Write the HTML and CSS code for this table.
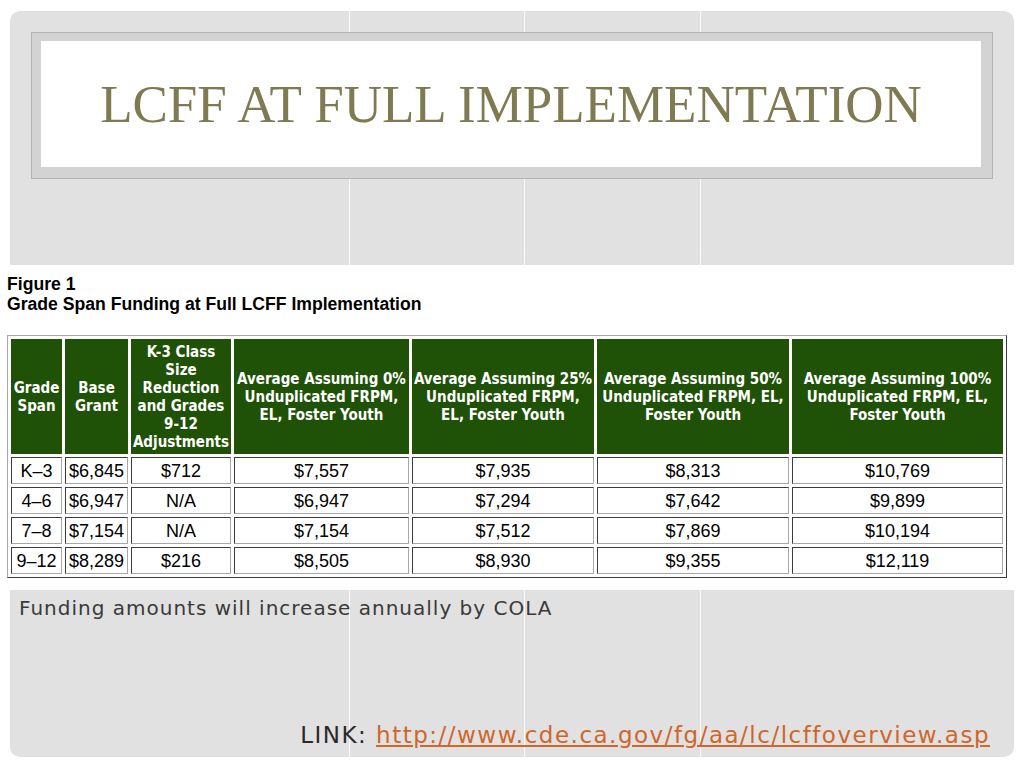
FILE: index.html
```html
<!DOCTYPE html>
<html lang="en">
<head>
<meta charset="utf-8">
<title>LCFF at Full Implementation</title>
<link rel="stylesheet" href="styles.css">
</head>
<body>
<div class="slide">
  <div class="title-frame">
    <div class="title-inner">
      <h1 class="title">LCFF AT FULL IMPLEMENTATION</h1>
    </div>
  </div>

  <div class="figure">
    <div class="caption">
      <div>Figure 1</div>
      <div>Grade Span Funding at Full LCFF Implementation</div>
    </div>
    <table class="funding">
      <colgroup>
        <col class="c1"><col class="c2"><col class="c3"><col class="c4"><col class="c5"><col class="c6"><col class="c7">
      </colgroup>
      <thead>
        <tr>
          <th>Grade<br>Span</th>
          <th>Base<br>Grant</th>
          <th>K-3 Class<br>Size<br>Reduction<br>and Grades<br>9-12<br>Adjustments</th>
          <th>Average Assuming 0%<br>Unduplicated FRPM,<br>EL, Foster Youth</th>
          <th>Average Assuming 25%<br>Unduplicated FRPM,<br>EL, Foster Youth</th>
          <th>Average Assuming 50%<br>Unduplicated FRPM, EL,<br>Foster Youth</th>
          <th>Average Assuming 100%<br>Unduplicated FRPM, EL,<br>Foster Youth</th>
        </tr>
      </thead>
      <tbody>
        <tr><td>K–3</td><td>$6,845</td><td>$712</td><td>$7,557</td><td>$7,935</td><td>$8,313</td><td>$10,769</td></tr>
        <tr><td>4–6</td><td>$6,947</td><td>N/A</td><td>$6,947</td><td>$7,294</td><td>$7,642</td><td>$9,899</td></tr>
        <tr><td>7–8</td><td>$7,154</td><td>N/A</td><td>$7,154</td><td>$7,512</td><td>$7,869</td><td>$10,194</td></tr>
        <tr><td>9–12</td><td>$8,289</td><td>$216</td><td>$8,505</td><td>$8,930</td><td>$9,355</td><td>$12,119</td></tr>
      </tbody>
    </table>
  </div>

  <p class="note">Funding amounts will increase annually by COLA</p>

  <p class="link-line">LINK: <a class="link" href="#">http://www.cde.ca.gov/fg/aa/lc/lcffoverview.asp</a></p>
</div>
</body>
</html>
```

FILE: styles.css
```css
html, body {
  margin: 0;
  padding: 0;
  background: #ffffff;
}

body {
  width: 1024px;
  height: 768px;
  overflow: hidden;
}

.slide {
  margin: 11px 10px 0 10px;
  height: 746px;
  border-radius: 10px;
  background-color: #e1e1e1;
  background-image: linear-gradient(to right,
    transparent 339px, rgba(255,255,255,0.85) 339px, rgba(255,255,255,0.85) 340px, transparent 340px,
    transparent 514px, rgba(255,255,255,0.85) 514px, rgba(255,255,255,0.85) 515px, transparent 515px,
    transparent 690px, rgba(255,255,255,0.85) 690px, rgba(255,255,255,0.85) 691px, transparent 691px);
  display: flex;
  flex-direction: column;
}

.title-frame {
  margin: 21px 0 0 21px;
  width: 962px;
  height: 147px;
  box-sizing: border-box;
  border: 1px solid #b4b4b4;
  background: #d3d3d3;
  padding: 8px 11px 11px 9px;
}

.title-inner {
  height: 100%;
  background: #ffffff;
  display: flex;
  align-items: center;
  justify-content: center;
}

.title {
  margin: 0;
  font-family: "Liberation Serif", "Times New Roman", serif;
  font-weight: normal;
  font-size: 53px;
  line-height: 1;
  color: #7e7a51;
  letter-spacing: 0;
}

.figure {
  margin: 86px -10px 0 -10px;
  height: 325px;
  box-sizing: border-box;
  background: #ffffff;
  padding: 9px 0 0 7px;
}

.caption {
  font-family: "Liberation Sans", Arial, sans-serif;
  font-weight: bold;
  font-size: 17.6px;
  line-height: 20px;
  color: #000;
}

.funding {
  margin-top: 21px;
  width: 1000px;
  table-layout: fixed;
  border-collapse: separate;
  border-spacing: 3px;
  border-width: 1px;
  border-style: solid;
  border-color: #a8a8a8 #3c3c3c #3c3c3c #a8a8a8;
}

.c1 { width: 51px; }
.c2 { width: 63px; }
.c3 { width: 100px; }
.c4 { width: 175px; }
.c5 { width: 182px; }
.c6 { width: 192px; }
.c7 { width: 211px; }

.funding th {
  height: 115px;
  box-sizing: border-box;
  padding: 0;
  background: #1f5106;
  color: #ffffff;
  font-family: "DejaVu Sans Condensed", "DejaVu Sans", sans-serif;
  font-stretch: condensed;
  font-weight: bold;
  font-size: 15px;
  line-height: 18px;
  text-align: center;
  vertical-align: middle;
  border: 1px solid #1f5106;
  white-space: nowrap;
}

.funding td {
  height: 27px;
  box-sizing: border-box;
  padding: 0;
  font-family: "Liberation Sans", Arial, sans-serif;
  font-size: 18px;
  line-height: 24px;
  color: #000;
  text-align: center;
  vertical-align: middle;
  background: #ffffff;
  border-width: 1px;
  border-style: solid;
  border-color: #3c3c3c #a8a8a8 #a8a8a8 #3c3c3c;
  white-space: nowrap;
}

.note {
  margin: 6px 0 0 9px;
  font-family: "DejaVu Sans", sans-serif;
  font-size: 20px;
  line-height: 24px;
  letter-spacing: 1px;
  color: #3a3a3a;
}

.link-line {
  margin: auto 24px 8px 0;
  text-align: right;
  font-family: "DejaVu Sans", sans-serif;
  font-size: 23px;
  line-height: 28px;
  letter-spacing: 1.5px;
  color: #2a2a2a;
}

.link {
  color: #d0662a;
  text-decoration: underline;
}
```
